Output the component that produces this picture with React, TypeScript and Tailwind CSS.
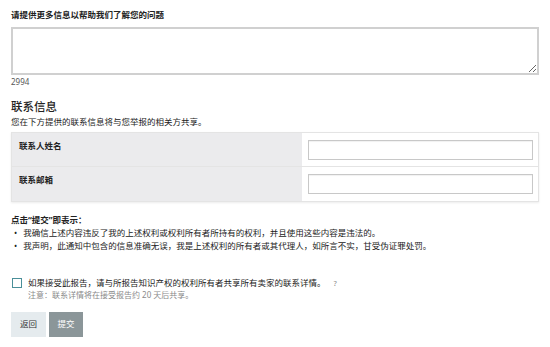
import React from "react";

const font = { fontFamily: '"Noto Sans", "Noto Sans CJK SC", sans-serif' };

export default function App() {
  return (
    <div className="w-[550px] h-[347px] bg-white text-[#222] overflow-hidden" style={font}>
      <div className="pl-[11px] pr-[11px] pt-[9px]">
        <div className="text-[8.5px] font-bold leading-[12px]">请提供更多信息以帮助我们了解您的问题</div>
        <textarea className="mt-[6px] block w-[528px] h-[48px] border-2 border-[#d0d0d0] rounded-none outline-none resize-y bg-white" />
        <div className="mt-[2px] text-[8px] leading-[10px] text-[#555]">2994</div>

        <div className="mt-[12px] text-[11.5px] font-medium leading-[16px]">联系信息</div>
        <div className="mt-[1px] text-[8.5px] leading-[12px]">您在下方提供的联系信息将与您举报的相关方共享。</div>

        <div className="mt-[4px] w-[528px] border border-[#e4e4e4] shadow-[0_1px_2px_rgba(0,0,0,0.08)]">
          <div className="flex h-[34px] border-b border-[#e4e4e4]">
            <div className="w-[290px] bg-[#ebebed] pl-[7px] pt-[7px] text-[8.5px] font-bold leading-[12px]">联系人姓名</div>
            <div className="flex-1 bg-white flex items-center pl-[6px] pr-[5px]">
              <input className="w-full h-[20px] border border-[#c8c8c8] shadow-[inset_0_1px_1px_rgba(0,0,0,0.06)] outline-none" />
            </div>
          </div>
          <div className="flex h-[34px]">
            <div className="w-[290px] bg-[#ebebed] pl-[7px] pt-[7px] text-[8.5px] font-bold leading-[12px]">联系邮箱</div>
            <div className="flex-1 bg-white flex items-center pl-[6px] pr-[5px]">
              <input className="w-full h-[20px] border border-[#c8c8c8] shadow-[inset_0_1px_1px_rgba(0,0,0,0.06)] outline-none" />
            </div>
          </div>
        </div>

        <div className="mt-[12px] text-[8.5px] font-bold leading-[12px]">点击“提交”即表示：</div>
        <ul className="text-[8.5px] leading-[13px]">
          <li className="flex gap-[6px] pl-[3px]"><span>•</span><span>我确信上述内容违反了我的上述权利或权利所有者所持有的权利，并且使用这些内容是违法的。</span></li>
          <li className="flex gap-[6px] pl-[3px]"><span>•</span><span>我声明，此通知中包含的信息准确无误，我是上述权利的所有者或其代理人，如所言不实，甘受伪证罪处罚。</span></li>
        </ul>

        <div className="mt-[25px] flex items-start">
          <div className="mt-[1px] ml-[1px] w-[10px] h-[10px] border border-[#4a8f99] bg-white shrink-0" />
          <div className="ml-[6px]">
            <div className="flex items-center text-[8.5px] leading-[12px]">
              <span>如果接受此报告，请与所报告知识产权的权利所有者共享所有卖家的联系详情。</span>
              <span className="ml-[8px] text-[7.5px] text-[#888]">?</span>
            </div>
            <div className="text-[8px] leading-[12px] text-[#8a8a8a]">注意：联系详情将在接受报告约 20 天后共享。</div>
          </div>
        </div>

        <div className="mt-[11px] flex gap-[3px]">
          <button className="w-[35px] h-[25px] bg-[#e5ebee] text-[8.5px] text-[#333]">返回</button>
          <button className="w-[34px] h-[25px] bg-[#8b9699] text-[8.5px] text-white">提交</button>
        </div>
      </div>
    </div>
  );
}
